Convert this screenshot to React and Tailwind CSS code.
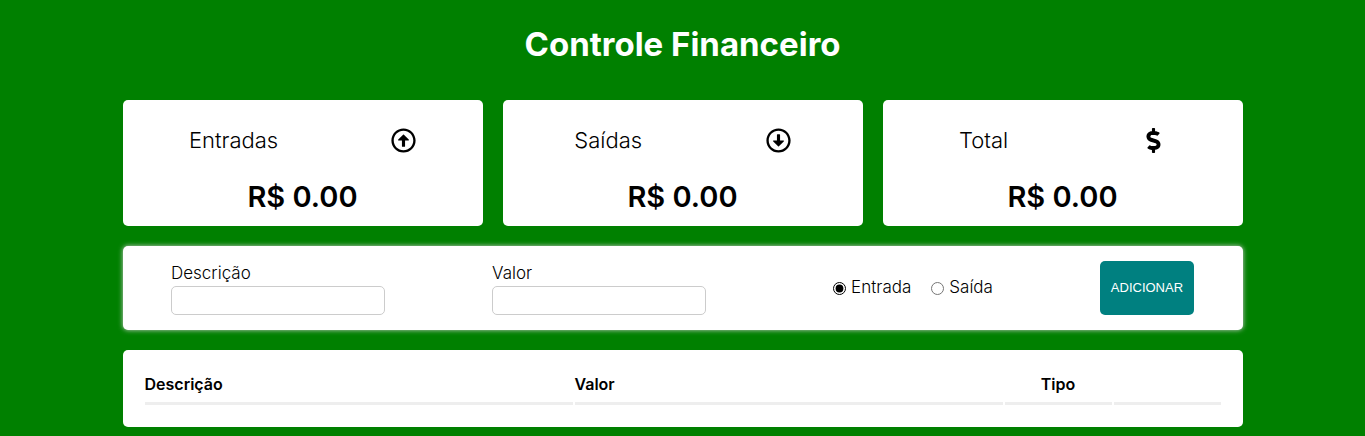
import { useState } from "react";
import {
  FaDollarSign,
  FaRegArrowAltCircleDown,
  FaRegArrowAltCircleUp,
} from "react-icons/fa";

const summary = [
  { title: "Entradas", Icon: FaRegArrowAltCircleUp, value: "0.00" },
  { title: "Saídas", Icon: FaRegArrowAltCircleDown, value: "0.00" },
  { title: "Total", Icon: FaDollarSign, value: "0.00" },
];

function Header() {
  return (
    <header className="flex h-[100px] justify-center pt-6">
      <h1 className="text-[33px] leading-10 font-bold text-white">
        Controle Financeiro
      </h1>
    </header>
  );
}

function SummaryCard({ title, Icon, value }) {
  return (
    <section className="flex-1 rounded-[5px] bg-white px-[15px] pt-[25px] pb-[9px]">
      <header className="flex items-center justify-around gap-[10px]">
        <h2 className="text-[22px] leading-[30px] font-light">{title}</h2>
        <Icon size={25} aria-hidden="true" />
      </header>
      <p className="mt-[22px] text-center text-[29px] leading-10 font-semibold">
        R$ {value}
      </p>
    </section>
  );
}

function Field({ id, label, type }) {
  return (
    <div className="flex flex-col">
      <label htmlFor={id} className="leading-[25px]">
        {label}
      </label>
      <input
        id={id}
        type={type}
        className="h-[29px] w-[214px] rounded-[5px] border border-[#ccc] px-[10px] outline-none"
      />
    </div>
  );
}

function Option({ id, label, checked, onChange }) {
  return (
    <div className="flex items-center gap-[5px]">
      <input
        id={id}
        type="radio"
        name="kind"
        checked={checked}
        onChange={onChange}
        className="size-[13px] accent-black"
      />
      <label htmlFor={id}>{label}</label>
    </div>
  );
}

function EntryForm() {
  const [isExpense, setExpense] = useState(false);
  return (
    <form
      onSubmit={(event) => event.preventDefault()}
      className="flex justify-around gap-[10px] rounded-[5px] bg-white py-[15px] text-[17px] font-light shadow-[0_0_5px_#ccc]"
    >
      <Field id="description" label="Descrição" type="text" />
      <Field id="amount" label="Valor" type="number" />
      <div className="flex items-center gap-5 pl-5">
        <Option
          id="income"
          label="Entrada"
          checked={!isExpense}
          onChange={() => setExpense(false)}
        />
        <Option
          id="expense"
          label="Saída"
          checked={isExpense}
          onChange={() => setExpense(true)}
        />
      </div>
      <button
        type="submit"
        className="min-w-[94px] cursor-pointer rounded-[5px] bg-[#008080] px-2 font-['Liberation_Sans',sans-serif] text-[13px] font-normal text-white"
      >
        ADICIONAR
      </button>
    </form>
  );
}

function EntryTable() {
  return (
    <div className="rounded-[5px] bg-white p-5">
      <table className="w-full table-fixed border-separate border-spacing-[2px] text-left">
        <thead>
          <tr className="font-semibold *:h-[33px] *:border-b-[3px] *:border-[#eee] *:pb-[6px] *:font-semibold">
            <th className="w-[40%]">Descrição</th>
            <th className="w-[40%]">Valor</th>
            <th className="w-[10%] text-center">Tipo</th>
            <td className="w-[10%]"></td>
          </tr>
        </thead>
        <tbody></tbody>
      </table>
    </div>
  );
}

export default function App() {
  return (
    <div className="min-h-screen bg-[#008000] pb-2 font-[Inter,sans-serif] text-base text-black">
      <Header />
      <main className="mx-auto flex w-[98%] max-w-[1120px] flex-col gap-5">
        <div className="flex gap-5">
          {summary.map((item) => (
            <SummaryCard key={item.title} {...item} />
          ))}
        </div>
        <EntryForm />
        <EntryTable />
      </main>
    </div>
  );
}
